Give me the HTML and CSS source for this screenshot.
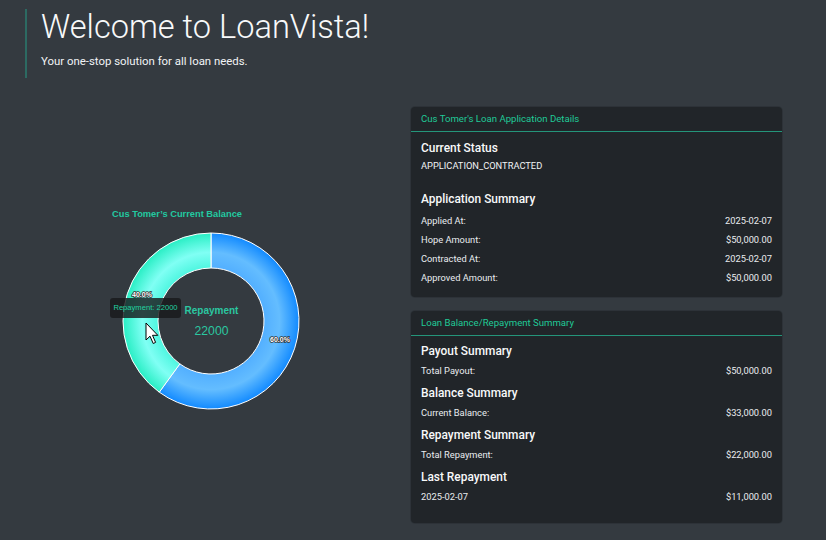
FILE: index.html
```html
<!DOCTYPE html>
<html lang="en">
<head>
<meta charset="utf-8">
<title>LoanVista</title>
<link rel="stylesheet" href="styles.css">
</head>
<body>
<header class="hero">
  <h1 class="hero-title">Welcome to LoanVista!</h1>
  <p class="hero-sub">Your one-stop solution for all loan needs.</p>
</header>
<main class="main">
  <section class="chart-col">
    <div class="chart">
      <svg class="chart-svg" width="411" height="330" viewBox="0 0 411 330">
        <defs>
          <radialGradient id="gBlue" gradientUnits="userSpaceOnUse" cx="211" cy="214" r="88">
            <stop offset="0" stop-color="#6cc0ff"/>
            <stop offset="0.6" stop-color="#52afff"/>
            <stop offset="0.78" stop-color="#64bdff"/>
            <stop offset="1" stop-color="#128aff"/>
          </radialGradient>
          <radialGradient id="gCyan" gradientUnits="userSpaceOnUse" cx="211" cy="214" r="88">
            <stop offset="0" stop-color="#80fff4"/>
            <stop offset="0.6" stop-color="#4ef6e0"/>
            <stop offset="0.78" stop-color="#80fff4"/>
            <stop offset="1" stop-color="#28eec4"/>
          </radialGradient>
        </defs>
        <text class="chart-title" x="112" y="110">Cus Tomer’s Current Balance</text>
        <path d="M211,126 A88,88 0 1 1 159.27,285.19 L179.85,256.88 A53,53 0 1 0 211,161 Z" fill="url(#gBlue)" stroke="#ffffff" stroke-width="1"/>
        <path d="M159.27,285.19 A88,88 0 0 1 211,126 L211,161 A53,53 0 0 0 179.85,256.88 Z" fill="url(#gCyan)" stroke="#ffffff" stroke-width="1"/>
        <text class="pct" x="142" y="190" text-anchor="middle">40.0%</text>
        <text class="pct" x="280" y="235" text-anchor="middle">60.0%</text>
        <text class="center-label" x="211.5" y="207" text-anchor="middle">Repayment</text>
        <text class="center-value" x="211.5" y="228" text-anchor="middle">22000</text>
      </svg>
      <div class="tooltip">Repayment: 22000</div>
      <svg class="cursor" width="16" height="24" viewBox="0 0 16 24">
        <path d="M1,1 L1,18 L5,14.2 L8.2,21.5 L10.6,20.4 L7.5,13.3 L12.8,13.3 Z" fill="#ffffff" stroke="#000000" stroke-width="1" stroke-linejoin="round"/>
      </svg>
    </div>
  </section>
  <section class="cards">
    <article class="card">
      <div class="card-header">Cus Tomer's Loan Application Details</div>
      <div class="card-body card-body-app">
        <h2 class="sec-title">Current Status</h2>
        <div class="status">APPLICATION_CONTRACTED</div>
        <h2 class="sec-title sec-title-gap">Application Summary</h2>
        <div class="row"><span>Applied At:</span><span>2025-02-07</span></div>
        <div class="row"><span>Hope Amount:</span><span>$50,000.00</span></div>
        <div class="row"><span>Contracted At:</span><span>2025-02-07</span></div>
        <div class="row"><span>Approved Amount:</span><span>$50,000.00</span></div>
      </div>
    </article>
    <article class="card">
      <div class="card-header">Loan Balance/Repayment Summary</div>
      <div class="card-body card-body-bal">
        <h2 class="sec-title sec-title-bal">Payout Summary</h2>
        <div class="row"><span>Total Payout:</span><span>$50,000.00</span></div>
        <h2 class="sec-title sec-title-bal sec-title-next">Balance Summary</h2>
        <div class="row"><span>Current Balance:</span><span>$33,000.00</span></div>
        <h2 class="sec-title sec-title-bal sec-title-next">Repayment Summary</h2>
        <div class="row"><span>Total Repayment:</span><span>$22,000.00</span></div>
        <h2 class="sec-title sec-title-bal sec-title-next">Last Repayment</h2>
        <div class="row"><span>2025-02-07</span><span>$11,000.00</span></div>
      </div>
    </article>
  </section>
</main>
</body>
</html>
```
FILE: styles.css
```css
* { box-sizing: border-box; }
html, body { margin: 0; padding: 0; }
body {
  background: #343a40;
  font-family: Roboto, "Liberation Sans", Arial, sans-serif;
  color: #f8f9fa;
  width: 826px;
  height: 540px;
  overflow: hidden;
}
.hero {
  margin: 9px 0 0 25px;
  border-left: 2px solid #2c6a62;
  padding: 0 0 9px 14px;
  height: 69px;
}
.hero-title {
  margin: 0;
  font-weight: 300;
  font-size: 32.6px;
  line-height: 36px;
  color: #f8f9fa;
}
.hero-sub {
  margin: 8px 0 0;
  font-size: 11.4px;
  line-height: 16px;
  color: #f1f3f5;
}
.main {
  display: flex;
  margin-top: 29px;
}
.chart-col {
  width: 411px;
  flex: none;
}
.chart {
  position: relative;
  width: 411px;
  height: 330px;
}
.chart-svg { display: block; }
.chart-title {
  font-family: "Liberation Sans", Arial, sans-serif;
  font-weight: 700;
  font-size: 9.3px;
  fill: #22c9a0;
}
.pct {
  font-family: "Liberation Sans", Arial, sans-serif;
  font-weight: 700;
  font-size: 7px;
  fill: #ffffff;
  stroke: #333333;
  stroke-width: 1.6px;
  paint-order: stroke;
}
.center-label {
  font-family: "Liberation Sans", Arial, sans-serif;
  font-weight: 700;
  font-size: 10px;
  fill: #2bc7a0;
}
.center-value {
  font-family: "Liberation Sans", Arial, sans-serif;
  font-size: 12.2px;
  fill: #2bc7a0;
}
.tooltip {
  position: absolute;
  left: 110px;
  top: 191px;
  width: 71px;
  height: 20px;
  background: rgba(24, 26, 28, 0.82);
  border-radius: 3px;
  font-family: "Liberation Sans", Arial, sans-serif;
  font-size: 7.6px;
  line-height: 20px;
  text-align: center;
  color: #22d3a0;
}
.cursor {
  position: absolute;
  left: 145px;
  top: 215px;
}
.cards {
  width: 371px;
  flex: none;
  display: flex;
  flex-direction: column;
  gap: 14px;
}
.card {
  background: #212529;
  border-radius: 4px;
  box-shadow: 0 0 0 1px rgba(0, 0, 0, 0.12);
}
.card-header {
  height: 25px;
  padding: 0 10px;
  line-height: 24px;
  font-size: 9.6px;
  color: #20c997;
  border-bottom: 1px solid #24957a;
}
.card-body { padding: 7px 10px 10px; }
.card-body-bal { padding: 6px 10px 17px; }
.sec-title {
  margin: 0;
  font-size: 11.9px;
  font-weight: 500;
  line-height: 18px;
  color: #f8f9fa;
}
.sec-title-gap { margin-top: 15px; margin-bottom: 3px; }
.sec-title-bal { margin-bottom: 0.5px; }
.sec-title-next { margin-top: 4.5px; }
.status {
  font-size: 9.3px;
  line-height: 18px;
  color: #f1f3f5;
}
.row {
  display: flex;
  justify-content: space-between;
  font-size: 9.3px;
  line-height: 19px;
  color: #e9ecef;
}
```
